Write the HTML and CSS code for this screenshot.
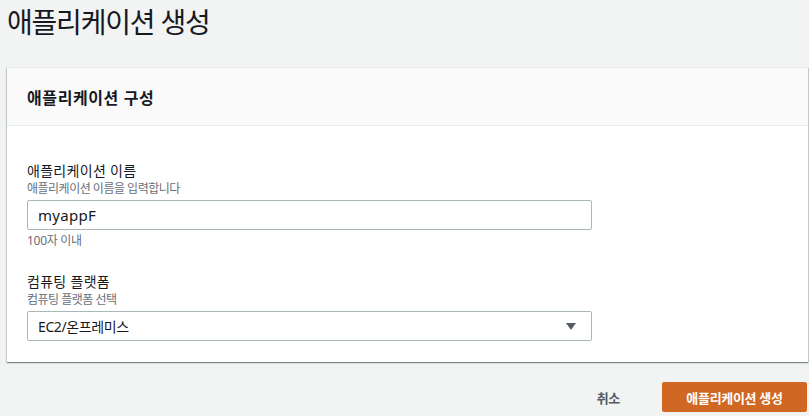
FILE: index.html
```html
<!DOCTYPE html>
<html lang="ko">
<head>
<meta charset="utf-8">
<title>애플리케이션 생성</title>
<link rel="stylesheet" href="styles.css">
</head>
<body>
<div class="page">
  <h1 class="title">애플리케이션 생성</h1>
  <section class="card">
    <div class="card-header">
      <h2 class="card-title">애플리케이션 구성</h2>
    </div>
    <div class="card-body">
      <div class="field">
        <div class="label">애플리케이션 이름</div>
        <div class="desc">애플리케이션 이름을 입력합니다</div>
        <div class="input text-input">myappF</div>
        <div class="hint">100자 이내</div>
      </div>
      <div class="field field-2">
        <div class="label">컴퓨팅 플랫폼</div>
        <div class="desc">컴퓨팅 플랫폼 선택</div>
        <div class="input select">
          <span>EC2/온프레미스</span>
          <svg class="caret" width="10" height="7" viewBox="0 0 10 7"><path d="M0 0 H10 L5 7 Z" fill="#545b64"/></svg>
        </div>
      </div>
    </div>
  </section>
  <div class="footer">
    <span class="cancel">취소</span>
    <span class="primary">애플리케이션 생성</span>
  </div>
</div>
</body>
</html>
```

FILE: styles.css
```css
html, body {
  margin: 0;
  background: #f2f3f3;
}
body {
  font-family: "Noto Sans", "Noto Sans CJK KR", sans-serif;
  color: #16191f;
}
.page {
  padding: 0 1px 0 7px;
}
.title {
  margin: 0 0 23px 0;
  font-size: 28px;
  font-weight: 400;
  line-height: 44px;
  letter-spacing: -1.2px;
}
.card {
  background: #fff;
  box-shadow: 0 1px 1px 0 rgba(0, 28, 36, 0.3), 1px 1px 1px 0 rgba(0, 28, 36, 0.15), -1px 1px 1px 0 rgba(0, 28, 36, 0.15);
  border-top: 1px solid #eaeded;
}
.card-header {
  background: #fafafa;
  border-bottom: 1px solid #eaeded;
  height: 58px;
  box-sizing: border-box;
  padding: 19px 20px 0;
}
.card-title {
  margin: 0;
  font-size: 16px;
  font-weight: 700;
  line-height: 22px;
  letter-spacing: 0.6px;
}
.card-body {
  padding: 36px 20px 21px;
}
.label {
  font-size: 14px;
  line-height: 18px;
  letter-spacing: 0.3px;
}
.desc {
  padding-top: 2px;
  font-size: 12px;
  line-height: 14px;
  color: #687078;
  letter-spacing: -0.5px;
}
.input {
  margin-top: 4px;
  width: 565px;
  height: 30px;
  box-sizing: border-box;
  border: 1px solid #aab7b8;
  border-radius: 2px;
  padding: 0 10px;
  display: flex;
  align-items: center;
  font-size: 14px;
}
.text-input {
  font-size: 15px;
  letter-spacing: 0.3px;
}
.hint {
  margin-top: 3px;
  font-size: 12px;
  line-height: 16px;
  color: #687078;
  letter-spacing: -0.3px;
}
.field-2 {
  margin-top: 24px;
}
.select {
  justify-content: space-between;
  padding-right: 15px;
  letter-spacing: -0.4px;
}
.footer {
  margin-top: 20px;
  display: flex;
  justify-content: flex-end;
  align-items: center;
  gap: 42px;
  padding-right: 1px;
}
.cancel {
  font-size: 13px;
  font-weight: 700;
  color: #545b64;
  letter-spacing: -0.3px;
}
.primary {
  width: 145px;
  height: 30px;
  box-sizing: border-box;
  background: #d06722;
  border-radius: 2px;
  color: #fff;
  font-size: 13px;
  font-weight: 700;
  display: flex;
  align-items: center;
  justify-content: center;
  letter-spacing: -0.3px;
}
```
